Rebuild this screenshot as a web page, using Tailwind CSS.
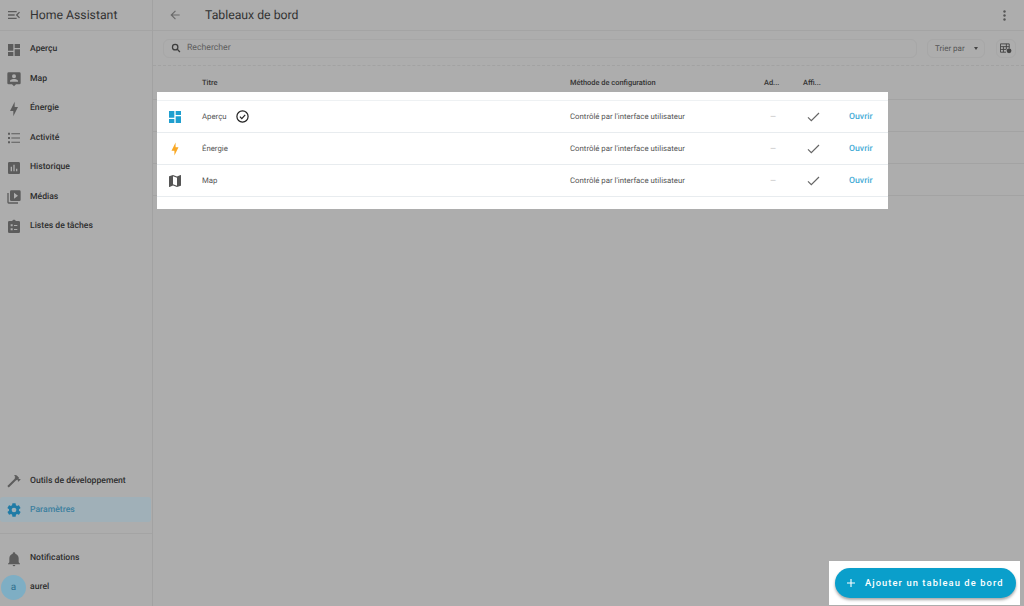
<!DOCTYPE html>
<html lang="fr">
<head>
  <meta charset="UTF-8">
  <title>Tableaux de bord</title>
  <script src="https://cdn.jsdelivr.net/npm/@tailwindcss/browser@4"></script>
</head>
<body class="w-[1024px] h-[606px] overflow-hidden bg-[#adadad] font-['Roboto',sans-serif] [text-rendering:geometricPrecision] text-[#2a2a2a] relative flex">

  <!-- Sidebar -->
  <aside class="w-[153px] h-full shrink-0 border-r border-[#a2a2a2] flex flex-col">
    <div class="h-[31px] shrink-0 border-b border-[#a4a4a4] flex items-center pl-[6px] gap-[8px]">
      <svg class="w-[16px] h-[16px]" viewBox="0 0 24 24" fill="#5c5c5c"><path d="M21 15.610 19.590 17l-5.010-5 5.010-5L21 8.390 17.440 12 21 15.610M3 6h13v2H3V6m0 7v-2h10v2H3m0 5v-2h13v2H3z"/></svg>
      <span class="text-[12.250px] text-[#333] leading-none pt-[1px]">Home Assistant</span>
    </div>
    <nav class="flex flex-col pt-[4px] text-[8.650px] font-medium text-[#2e2e2e]">
      <div class="h-[29.500px] flex items-center pl-[6px] gap-[8px]">
        <svg class="w-[16px] h-[16px]" viewBox="0 0 24 24" fill="#5c5c5c"><path d="M13 3v6h8V3M13 21h8V11h-8M3 21h8v-6H3M3 13h8V3H3v10z"/></svg>
        <span>Aperçu</span>
      </div>
      <div class="h-[29.500px] flex items-center pl-[6px] gap-[8px]">
        <svg class="w-[16px] h-[16px]" viewBox="0 0 24 24" fill="#5c5c5c"><path d="M4 2h16a2 2 0 0 1 2 2v14a2 2 0 0 1-2 2h-5l-3 3-3-3H4a2 2 0 0 1-2-2V4a2 2 0 0 1 2-2zm8 3a3 3 0 1 0 0 6 3 3 0 0 0 0-6zm-6 10v1h12v-1c0-2-4-3-6-3s-6 1-6 3z" fill-rule="evenodd"/></svg>
        <span>Map</span>
      </div>
      <div class="h-[29.500px] flex items-center pl-[6px] gap-[8px]">
        <svg class="w-[16px] h-[16px]" viewBox="0 0 24 24" fill="#5c5c5c"><path d="M11 15H6l7-14v8h5l-7 14v-8z"/></svg>
        <span>Énergie</span>
      </div>
      <div class="h-[29.500px] flex items-center pl-[6px] gap-[8px]">
        <svg class="w-[16px] h-[16px]" viewBox="0 0 24 24" fill="#5c5c5c"><path d="M3 4h3v3H3zM3 10.500h3v3H3zM3 17h3v3H3zM8 5h13v1.500H8zM8 11.250h13v1.500H8zM8 17.750h13v1.500H8z"/></svg>
        <span>Activité</span>
      </div>
      <div class="h-[29.500px] flex items-center pl-[6px] gap-[8px]">
        <svg class="w-[16px] h-[16px]" viewBox="0 0 24 24" fill="#5c5c5c"><path d="M9 17H7v-7h2v7m4 0h-2V7h2v10m4 0h-2v-4h2v4m2-14H5c-1.100 0-2 .9-2 2v14c0 1.100.9 2 2 2h14c1.100 0 2-.9 2-2V5c0-1.100-.9-2-2-2z"/></svg>
        <span>Historique</span>
      </div>
      <div class="h-[29.500px] flex items-center pl-[6px] gap-[8px]">
        <svg class="w-[16px] h-[16px]" viewBox="0 0 24 24" fill="#5c5c5c"><path d="M4 6H2v14a2 2 0 0 0 2 2h14v-2H4M20 2H8a2 2 0 0 0-2 2v12a2 2 0 0 0 2 2h12a2 2 0 0 0 2-2V4a2 2 0 0 0-2-2m-8 12.500v-9l6 4.500-6 4.500z"/></svg>
        <span>Médias</span>
      </div>
      <div class="h-[29.500px] flex items-center pl-[6px] gap-[8px]">
        <svg class="w-[16px] h-[16px]" viewBox="0 0 24 24" fill="#5c5c5c"><path fill-rule="evenodd" d="M19 3h-4.180C14.400 1.840 13.300 1 12 1s-2.400.84-2.820 2H5a2 2 0 0 0-2 2v14a2 2 0 0 0 2 2h14a2 2 0 0 0 2-2V5a2 2 0 0 0-2-2zM7 8h3v3H7zM7 14h3v3H7zM12 9h5v1.500h-5zM12 15h5v1.500h-5z"/></svg>
        <span>Listes de tâches</span>
      </div>
    </nav>
    <div class="mt-auto flex flex-col text-[8.650px] font-medium text-[#2e2e2e]">
      <div class="h-[29px] flex items-center pl-[6px] gap-[8px]">
        <svg class="w-[16px] h-[16px]" viewBox="0 0 24 24" fill="#5c5c5c"><path d="M2 19.630 13.430 8.200l-.71-.7 1.420-1.430L12 3.890c1.200-1.190 3.090-1.190 4.270 0l3.600 3.610-1.420 1.410h2.840l.71.71-3.550 3.590-.71-.71V9.620l-1.470 1.420-.71-.71L4.130 21.760 2 19.630z"/></svg>
        <span class="pt-[1px]">Outils de développement</span>
      </div>
      <div class="h-[25px] w-[151px] my-[2px] bg-[#a0b0b8] rounded-[3px] flex items-center pl-[6px] gap-[8px] text-[#3c7f9e]">
        <svg class="w-[16px] h-[16px]" viewBox="0 0 24 24" fill="#1f7ba6"><path d="M19.400 13c.04-.3.06-.65.06-1s-.02-.7-.07-1l2.100-1.650a.5.500 0 0 0 .12-.64l-2-3.460a.5.500 0 0 0-.6-.22l-2.500 1a7.300 7.300 0 0 0-1.700-1L14.500 2.400A.5.500 0 0 0 14 2h-4a.5.500 0 0 0-.5.420L9.100 5.050a7.600 7.600 0 0 0-1.700 1l-2.500-1a.5.500 0 0 0-.6.220l-2 3.460a.5.500 0 0 0 .12.640L4.600 11c-.05.3-.08.660-.08 1s.02.7.07 1l-2.100 1.650a.5.500 0 0 0-.12.640l2 3.460c.12.220.38.300.6.220l2.500-1c.52.400 1.080.730 1.700 1l.38 2.630c.05.240.25.420.5.420h4c.25 0 .46-.18.5-.42l.38-2.630a7.600 7.600 0 0 0 1.700-1l2.500 1c.22.080.48 0 .6-.22l2-3.460a.5.500 0 0 0-.12-.64L19.400 13zM12 15.500a3.500 3.500 0 1 1 0-7 3.500 3.500 0 0 1 0 7z"/></svg>
        <span class="pt-[2px]">Paramètres</span>
      </div>
      <div class="h-[10px] border-b border-[#a4a4a4]"></div>
      <div class="h-[29px] mt-[10px] flex items-center pl-[6px] gap-[8px]">
        <svg class="w-[16px] h-[16px]" viewBox="0 0 24 24" fill="#5c5c5c"><path d="M21 19v1H3v-1l2-2v-6c0-3.100 2.030-5.830 5-6.710V4a2 2 0 0 1 2-2 2 2 0 0 1 2 2v.29c2.970.88 5 3.610 5 6.710v6l2 2m-7 2a2 2 0 0 1-2 2 2 2 0 0 1-2-2"/></svg>
        <span>Notifications</span>
      </div>
      <div class="h-[29px] mb-[4px] flex items-center pl-[1px] gap-[4px]">
        <span class="w-[25px] h-[25px] rounded-full bg-[#7eaec4] flex items-center justify-center text-[10px] font-normal text-[#2f6f8e]">a</span>
        <span>aurel</span>
      </div>
    </div>
  </aside>

  <!-- Main -->
  <main class="flex-1 flex flex-col min-w-0">
    <header class="h-[31px] shrink-0 flex items-center pl-[15px] pr-[18px] border-b border-[#a4a4a4]">
      <svg class="w-[14px] h-[14px]" viewBox="0 0 24 24" fill="#6a6a6a"><path d="M20 11v2H8l5.500 5.500-1.420 1.420L4.160 12l7.920-7.920L13.500 5.500 8 11h12z"/></svg>
      <h1 class="ml-[23px] pt-[1px] text-[12.250px] text-[#333] leading-none">Tableaux de bord</h1>
      <svg class="ml-auto w-[3px] h-[11px]" viewBox="0 0 3 11" fill="#555"><circle cx="1.500" cy="1.500" r="1.200"/><circle cx="1.500" cy="5.500" r="1.200"/><circle cx="1.500" cy="9.500" r="1.200"/></svg>
    </header>
    <div class="h-[35px] shrink-0 flex items-center pl-[10px] border-b border-dashed border-[#a2a2a2]">
      <div class="w-[754px] h-[19px] rounded-[6px] border border-[#a7a7a7] flex items-center pl-[7px] gap-[6px] text-[8.700px] text-[#5e5e5e]">
        <svg class="w-[10px] h-[10px]" viewBox="0 0 24 24" fill="none" stroke="#3d3d3d" stroke-width="3"><circle cx="10" cy="10" r="6.500"/><path d="m15 15 6.500 6.500"/></svg>
        <span class="pt-[2px]">Rechercher</span>
      </div>
      <div class="ml-[10px] w-[58px] h-[19px] rounded-[6px] border border-[#a7a7a7] flex items-center pl-[7px] text-[8px] text-[#555]">
        <span class="pt-[1px]">Trier par</span>
        <span class="ml-[9px] w-0 h-0 border-x-[2.500px] border-x-transparent border-t-[3px] border-t-[#444]"></span>
      </div>
      <div class="ml-[11px] w-[20px] h-[19px] rounded-[6px] border border-[#a7a7a7] flex items-center justify-center">
        <svg class="w-[12px] h-[11px]" viewBox="0 0 13 11"><path d="M.5.500h9.500v5M.5.500v9h6M.5 3.500h9.500M.5 6.500h6M3.700 3.500v6M6.900 .5v6" fill="none" stroke="#444" stroke-width="1"/><circle cx="9.800" cy="8" r="2.600" fill="#444"/></svg>
      </div>
    </div>

    <!-- Table header -->
    <div class="h-[34px] shrink-0 flex items-center text-[7.450px] font-medium text-[#333] border-b border-[#a3a3a3]">
      <span class="ml-[49px] w-[368px]">Titre</span>
      <span class="w-[194px]">Méthode de configuration</span>
      <span class="w-[39px]">Ad...</span>
      <span>Affi...</span>
    </div>
    <div class="h-[32px] shrink-0 border-b border-[#a3a3a3]"></div>
    <div class="h-[32px] shrink-0 border-b border-[#a3a3a3]"></div>
    <div class="h-[32px] shrink-0 border-b border-[#a3a3a3]"></div>
  </main>

  <!-- Spotlight on the table rows -->
  <section class="absolute left-[157px] top-[92px] w-[731px] h-[117px] bg-white pt-[8px] text-[7.800px] text-[#555]">
    <div class="border-t border-[#eef1f3]">
      <div class="h-[32px] border-b border-[#e8ecef] grid grid-cols-[45px_368px_193px_20px_37px_1fr] items-center">
        <svg class="ml-[10px] w-[16px] h-[16px]" viewBox="0 0 24 24" fill="#1f9fcf"><path d="M13 3v6h8V3M13 21h8V11h-8M3 21h8v-6H3M3 13h8V3H3v10z"/></svg>
        <span class="flex items-center">Aperçu<svg class="ml-[9px] w-[13px] h-[13px]" viewBox="0 0 13 13" fill="none" stroke="#222" stroke-width="1.200"><circle cx="6.500" cy="6.500" r="5.600"/><path d="m3.900 6.700 1.900 1.900 3.400-3.700"/></svg></span>
        <span>Contrôlé par l'interface utilisateur</span>
        <span class="text-center text-[#bbb]">—</span>
        <svg class="ml-[24px] w-[13px] h-[10px]" viewBox="0 0 13 10" fill="none" stroke="#666" stroke-width="1.200"><path d="m1 5.400 3.300 3.300L12 1"/></svg>
        <span class="ml-[29px] pt-[2px] text-[#45acd6] text-[8.700px] font-medium">Ouvrir</span>
      </div>
      <div class="h-[32px] border-b border-[#e8ecef] grid grid-cols-[45px_368px_193px_20px_37px_1fr] items-center">
        <svg class="ml-[11px] w-[14px] h-[14px]" viewBox="0 0 24 24" fill="#f9a825"><path d="M11 15H6l7-14v8h5l-7 14v-8z"/></svg>
        <span>Énergie</span>
        <span>Contrôlé par l'interface utilisateur</span>
        <span class="text-center text-[#bbb]">—</span>
        <svg class="ml-[24px] w-[13px] h-[10px]" viewBox="0 0 13 10" fill="none" stroke="#666" stroke-width="1.200"><path d="m1 5.400 3.300 3.300L12 1"/></svg>
        <span class="ml-[29px] pt-[2px] text-[#45acd6] text-[8.700px] font-medium">Ouvrir</span>
      </div>
      <div class="h-[32px] border-b border-[#e8ecef] grid grid-cols-[45px_368px_193px_20px_37px_1fr] items-center">
        <svg class="ml-[10px] w-[16px] h-[16px]" viewBox="0 0 24 24" fill="#555"><path d="M15 19 9 16.890V5l6 2.110M20.500 3h-.16L15 5.100 9 3 3.360 4.900c-.21.070-.36.250-.36.480V20.500a.5.500 0 0 0 .5.500c.05 0 .11 0 .16-.03L9 18.900l6 2.100 5.640-1.900c.21-.1.360-.25.360-.48V3.500a.5.500 0 0 0-.5-.5z"/></svg>
        <span>Map</span>
        <span>Contrôlé par l'interface utilisateur</span>
        <span class="text-center text-[#bbb]">—</span>
        <svg class="ml-[24px] w-[13px] h-[10px]" viewBox="0 0 13 10" fill="none" stroke="#666" stroke-width="1.200"><path d="m1 5.400 3.300 3.300L12 1"/></svg>
        <span class="ml-[29px] pt-[2px] text-[#45acd6] text-[8.700px] font-medium">Ouvrir</span>
      </div>
    </div>
  </section>

  <!-- Spotlight on the add button -->
  <div class="absolute left-[829px] top-[561px] w-[191px] h-[44px] bg-white flex items-center pl-[6px]">
    <button class="w-[181px] h-[30px] rounded-full bg-[#0a9fcb] shadow-[0_2px_3px_rgba(0,0,0,0.35)] flex items-center pl-[12px] text-white text-[9.300px] font-medium tracking-[1.100px]">
      <svg class="w-[8px] h-[8px]" viewBox="0 0 10 10" fill="white"><path d="M4.300 0h1.400v4.300H10v1.400H5.700V10H4.300V5.700H0V4.300h4.300z"/></svg>
      <span class="ml-[10px]">Ajouter un tableau de bord</span>
    </button>
  </div>
</body>
</html>
